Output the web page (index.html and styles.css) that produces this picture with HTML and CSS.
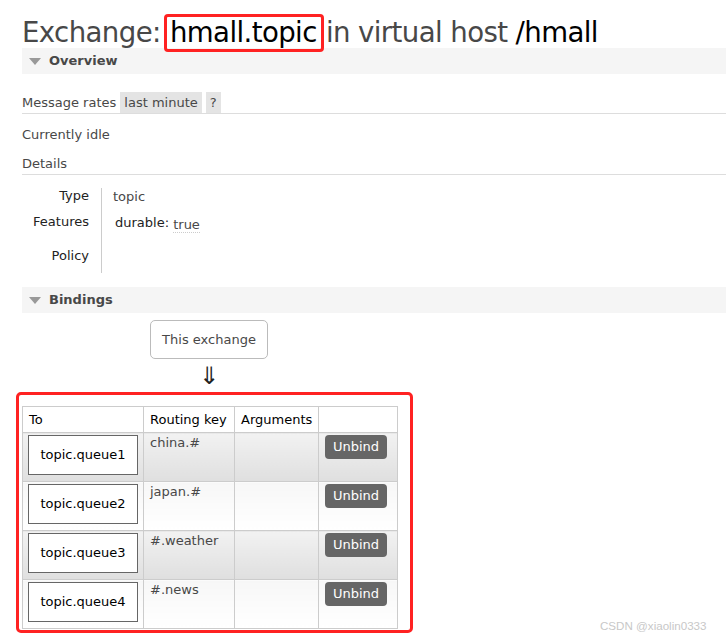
FILE: index.html
```html
<!DOCTYPE html>
<html>
<head>
<meta charset="utf-8">
<link rel="stylesheet" href="styles.css">
</head>
<body>
<div class="page">
  <h1 class="title">Exchange: <span class="hl"><b>hmall.topic</b></span> in virtual host <b>/hmall</b></h1>
  <div class="section-head"><span class="tri"></span>Overview</div>
  <div class="rates">
    <span class="rl">Message rates</span>
    <span class="pill">last minute</span>
    <span class="pill">?</span>
  </div>
  <p class="idle">Currently idle</p>
  <div class="subhead">Details</div>
  <div class="facts">
    <div class="labels">
      <div class="l1">Type</div>
      <div class="l2">Features</div>
      <div class="l3">Policy</div>
    </div>
    <div class="vals">
      <div class="v1">topic</div>
      <div class="v2"><span class="k">durable:</span> <span class="dot">true</span></div>
    </div>
  </div>
  <div class="section-head bindings"><span class="tri"></span>Bindings</div>
  <div class="flow">
    <div class="this-ex">This exchange</div>
    <div class="arrow">⇓</div>
  </div>
  <div class="redbox">
    <table class="bind">
      <colgroup><col class="w1"><col class="w2"><col class="w3"><col class="w4"></colgroup>
      <thead>
        <tr><th>To</th><th>Routing key</th><th>Arguments</th><th></th></tr>
      </thead>
      <tbody>
        <tr class="odd"><td><div class="queue">topic.queue1</div></td><td class="key">china.#</td><td></td><td><span class="btn">Unbind</span></td></tr>
        <tr class="even"><td><div class="queue">topic.queue2</div></td><td class="key">japan.#</td><td></td><td><span class="btn">Unbind</span></td></tr>
        <tr class="odd"><td><div class="queue">topic.queue3</div></td><td class="key">#.weather</td><td></td><td><span class="btn">Unbind</span></td></tr>
        <tr class="even"><td><div class="queue">topic.queue4</div></td><td class="key">#.news</td><td></td><td><span class="btn">Unbind</span></td></tr>
      </tbody>
    </table>
  </div>
  <div class="wm">CSDN @xiaolin0333</div>
</div>
</body>
</html>
```

FILE: styles.css
```css
html, body { margin: 0; padding: 0; background: #fff; }
body { font-family: "DejaVu Sans", Verdana, sans-serif; font-size: 13px; color: #484848; }
.page { position: relative; width: 726px; height: 640px; overflow: hidden; padding-left: 22px; box-sizing: border-box; }
.title { margin: 0; padding-top: 17px; height: 31px; font-weight: normal; font-size: 27.6px; line-height: 32px; color: #484848; font-family: "DejaVu Sans", sans-serif; letter-spacing: -0.6px; word-spacing: 0; white-space: nowrap; }
.title b { font-weight: normal; color: #000; }
.hl { display: inline-block; border: 3px solid #f22; border-radius: 4px; padding: 0 4px 0 3px; margin: -4px -6px -4px -5px; line-height: 32px; }
.section-head { height: 26px; background: #f5f5f5; font-weight: bold; font-size: 13px; line-height: 26px; color: #484848; display: flex; align-items: center; }
.section-head.bindings { margin-top: 14px; }
.tri { width: 0; height: 0; border-left: 6px solid transparent; border-right: 6px solid transparent; border-top: 7px solid #999; margin: 1px 8px 0 7px; }
.rates { margin-top: 18px; height: 21px; display: flex; align-items: center; gap: 4px; border-bottom: 1px solid #ddd; }
.pill { background: #e4e4e4; padding: 0 4px; line-height: 21px; height: 21px; }
.idle { margin: 12px 0 0; line-height: 18px; }
.subhead { margin-top: 11px; line-height: 18px; padding-bottom: 1px; border-bottom: 1px solid #ddd; }
.facts { display: flex; margin-top: 13px; height: 85px; }
.labels { width: 67px; text-align: right; color: #222; border-right: 1px solid #ccc; padding-right: 12px; }
.l1 { margin-top: 0; line-height: 16px; }
.l2 { margin-top: 10px; line-height: 16px; }
.l3 { margin-top: 18px; line-height: 16px; }
.vals { padding-left: 11px; }
.v1 { line-height: 16px; margin-top: 1px; }
.v2 { line-height: 16px; margin-top: 10px; padding-left: 2px; }
.k { color: #222; }
.dot { border-bottom: 1px dotted #ccc; position: relative; top: 2px; }
.flow { width: 374px; display: flex; flex-direction: column; align-items: center; margin-top: 7px; }
.this-ex { border: 1px solid #bbb; border-radius: 5px; padding: 0 11px; line-height: 37px; height: 37px; }
.arrow { font-size: 24px; line-height: 24px; margin-top: 5px; color: #222; }
.redbox { margin-top: 4px; margin-left: -6px; width: 397px; height: 241px; border: 3px solid #f22; border-radius: 5px; box-sizing: border-box; padding: 11px 0 0 3px; }
.bind { border-collapse: collapse; table-layout: fixed; width: 375px; }
.w1 { width: 121px; } .w2 { width: 91px; } .w3 { width: 84px; } .w4 { width: 79px; }
.bind th, .bind td { border: 1px solid #ccc; padding: 0; vertical-align: top; }
.bind thead tr { height: 26px; }
.bind th { font-weight: normal; text-align: left; color: #000; padding: 0 6px; vertical-align: middle; background: #fff; }
.bind tbody tr { height: 49px; }
.bind tr.odd td { background: linear-gradient(#f2f2f2, #dfdfdf); }
.bind tr.even td { background: linear-gradient(#f7f7f7, #fff); }
.queue { margin: 2px 5px 0 5px; border: 1px solid #666; background: #fff; height: 38px; line-height: 38px; text-align: center; color: #000; }
.key { padding: 2px 6px 0 !important; color: #484848; }
.btn { display: inline-block; margin: 2px 0 0 6px; background: #666; color: #fff; border-radius: 4px; padding: 0 8px; height: 24px; line-height: 24px; font-size: 13px; }
.wm { position: absolute; left: 600px; top: 619px; font-size: 11.6px; color: #c8c8c8; font-family: "Liberation Sans", sans-serif; }
```
